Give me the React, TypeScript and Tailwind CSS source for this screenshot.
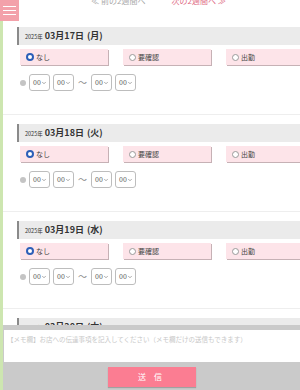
import { ChevronDown } from "lucide-react"

const DAYS = [
  { date: "03月17日", wd: "(月)" },
  { date: "03月18日", wd: "(火)" },
  { date: "03月19日", wd: "(水)" },
  { date: "03月20日", wd: "(木)" },
]

const OPTIONS = ["なし", "要確認", "出勤"]

function TimeSelect() {
  return (
    <div className="flex h-[17px] w-[21px] items-center justify-between rounded-[3px] border border-[#bdbdbd] bg-white pl-[3px] pr-[2px] text-[7px] text-[#555]">
      <span>00</span>
      <ChevronDown className="h-[6px] w-[6px] text-[#777]" strokeWidth={2.5} />
    </div>
  )
}

function DaySection({ date, wd }: { date: string; wd: string }) {
  return (
    <section className="mb-[9px] border-b border-[#eeeeee] pb-[23px] pl-[14px]">
      <div className="flex h-[18px] items-center border-l-2 border-[#8a8a8a] bg-[#ebebeb] pl-[6px] text-[#333]">
        <span className="mr-[2px] mt-[2px] text-[5.5px]">2025年</span>
        <span className="text-[9px] font-bold">{date}</span>
        <span className="ml-[3px] text-[9px] font-bold">{wd}</span>
      </div>

      <div className="mt-[4px] flex gap-[15px] pl-[3px]">
        {OPTIONS.map((opt, i) => (
          <div
            key={opt}
            className="flex h-[16px] w-[88px] shrink-0 items-center gap-[2px] bg-[#fde4e9] pl-[6px] text-[7px] text-[#444] shadow-[1px_1px_0_#c6b1b5]"
          >
            {i === 0 ? (
              <span className="h-[8px] w-[8px] rounded-full border-2 border-[#2d5fb8] bg-white" />
            ) : (
              <span className="h-[7px] w-[7px] rounded-full border border-[#9a9a9a] bg-white" />
            )}
            <span>{opt}</span>
          </div>
        ))}
      </div>

      <div className="mt-[9px] flex items-center gap-[3px] pl-[3px]">
        <span className="h-[6px] w-[6px] rounded-full bg-[#c4c4c4]" />
        <TimeSelect />
        <TimeSelect />
        <span className="px-[1px] text-[9px] text-[#888]">〜</span>
        <TimeSelect />
        <TimeSelect />
      </div>
    </section>
  )
}

export default function App() {
  return (
    <div className="min-h-screen overflow-hidden border-l-[3px] border-[#cde6b0] bg-white font-['Noto_Sans_CJK_JP',sans-serif]">
      <div className="-mt-[5px] flex h-[32px] justify-center gap-[26px] pl-[14px] text-[8px]">
        <span className="text-[#aaaaaa]">≪ 前の2週間へ</span>
        <span className="text-[#e06c86]">次の2週間へ ≫</span>
      </div>

      {DAYS.map((d) => (
        <DaySection key={d.date} date={d.date} wd={d.wd} />
      ))}

      <button className="fixed left-0 top-0 flex h-[21px] w-[19px] flex-col items-center justify-center gap-[2.5px] bg-[#f3a1aa]">
        <span className="h-[1.5px] w-[13px] bg-white" />
        <span className="h-[1.5px] w-[13px] bg-white" />
        <span className="h-[1.5px] w-[13px] bg-white" />
      </button>

      <div className="fixed bottom-0 left-[3px] right-0 flex h-[65px] flex-col items-center bg-[#cacaca] pt-[5px]">
        <div className="ml-[2px] h-[32px] w-full bg-white px-[3px] pt-[5px] text-[6.5px] text-[#c8c8c8]">
          【メモ欄】お店への伝達事項を記入してください（メモ欄だけの送信もできます）
        </div>
        <div className="mt-[5px] flex h-[20px] w-[88px] items-center justify-center bg-[#fb7d92] text-[8px] tracking-[3px] text-white shadow-[0_1px_1px_rgba(0,0,0,0.2)]">
          送 信
        </div>
      </div>
    </div>
  )
}
